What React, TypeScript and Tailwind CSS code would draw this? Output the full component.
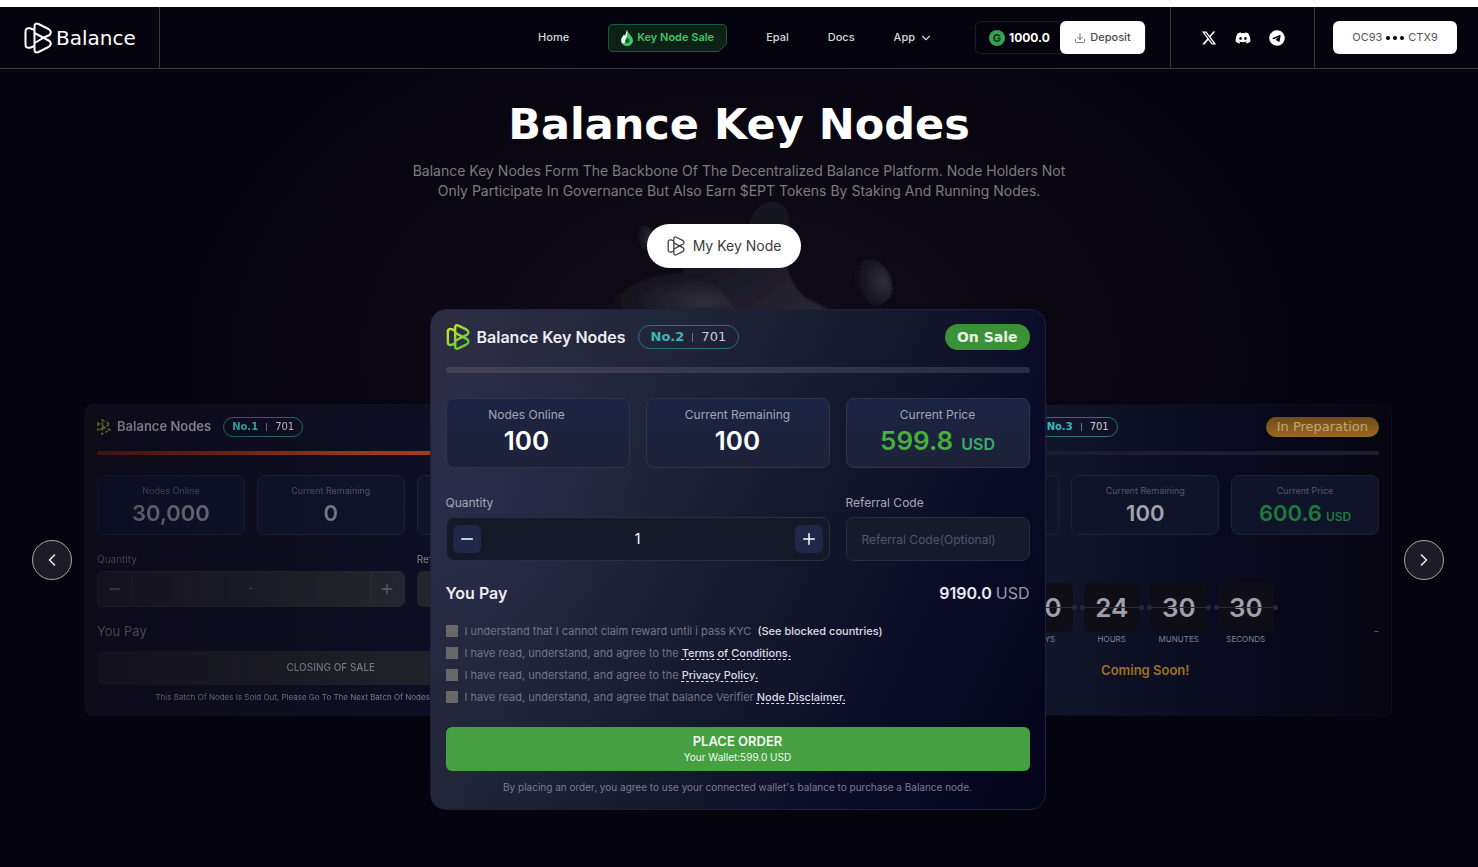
import React, { useId, useState } from "react";
import { ChevronDown, ChevronLeft, ChevronRight, Download, Minus, Plus } from "lucide-react";
import { FaDiscord, FaTelegram, FaXTwitter } from "react-icons/fa6";
import clsx from "clsx";

const wide = "font-['DejaVu_Sans',sans-serif]";

const agreements = [
  {
    id: "kyc",
    text: "I understand that I cannot claim reward until i pass KYC",
    link: "(See blocked countries)",
    dashed: false,
  },
  {
    id: "terms",
    text: "I have read, understand, and agree to the",
    link: "Terms of Conditions.",
    dashed: true,
  },
  {
    id: "privacy",
    text: "I have read, understand, and agree to the",
    link: "Privacy Policy.",
    dashed: true,
  },
  {
    id: "disclaimer",
    text: "I have read, understand, and agree that balance Verifier",
    link: "Node Disclaimer.",
    dashed: true,
  },
];

const countdown = [
  { value: "30", label: "DAYS" },
  { value: "24", label: "HOURS" },
  { value: "30", label: "MUNUTES" },
  { value: "30", label: "SECONDS" },
];

const Logo: React.FC<{ className?: string; lime?: boolean; strokeWidth?: number }> = ({
  className,
  lime,
  strokeWidth = 2,
}) => {
  const id = useId();

  return (
    <svg
      viewBox="0 0 28 32"
      className={className}
      fill="none"
      stroke={lime ? `url(#${id})` : "currentColor"}
      strokeWidth={strokeWidth}
      strokeLinejoin="round"
      aria-hidden="true"
    >
      <linearGradient id={id} x1="0" y1="0" x2="28" y2="32" gradientUnits="userSpaceOnUse">
        <stop stopColor="#e2e62e" />
        <stop offset="1" stopColor="#3fc43a" />
      </linearGradient>
      <path d="M10.500 8 6 6.300Q1.500 5.500 1.500 9.500V22.500Q1.500 26.500 6 25.700L10.500 24" />
      <path d="M20 15.500 10.500 21V27.500Q10.500 31.500 14.500 30L24.500 25Q28.500 22.500 25.500 19L10.500 11V4.500Q10.500 .5 14.500 2L24.500 7Q28.500 9.500 25.500 13Z" />
      <path d="M10.500 11V21" />
    </svg>
  );
};

const NodeBadge: React.FC<{ no: string; small?: boolean }> = ({ no, small }) => (
  <span
    className={clsx(
      "flex items-center gap-2 rounded-full border border-[#28707d]",
      small ? "h-5 px-2 text-[10px]" : "h-6 px-3 text-[13px]",
      wide
    )}
  >
    <span className="font-bold text-[#3fb5bd]">{no}</span>
    <span className={clsx("w-px bg-[#6d7183]", small ? "h-2" : "h-[9px]")} />
    <span className="text-[#c9cbd6]">701</span>
  </span>
);

const Stat: React.FC<{
  label: string;
  value: string;
  unit?: string;
  small?: boolean;
  muted?: boolean;
  className?: string;
}> = ({ label, value, unit, small, muted, className }) => (
  <div
    className={clsx(
      "flex min-w-0 flex-col items-center justify-center rounded-lg border",
      small
        ? "h-[60px] border-[#1d2238] bg-[#10142b]"
        : "h-[70px] border-[#2c3550] bg-linear-to-b from-[#1b2444] to-[#1d2238]",
      className
    )}
  >
    <span
      className={clsx(
        "whitespace-nowrap leading-4",
        small ? "text-[9px] text-[#55576a]" : "text-xs text-[#a3a5b3]"
      )}
    >
      {label}
    </span>
    <span
      className={clsx(
        "flex items-baseline whitespace-nowrap font-semibold",
        small ? "gap-1 text-[22px] leading-7" : "gap-2 text-[26px] leading-9",
        unit && (small ? "text-[#1f7a3c]" : "text-[#47ae40]"),
        !unit && (muted ? "text-[#7c7c88]" : small ? "text-[#a2a2ae]" : "text-white")
      )}
    >
      {value}
      {unit && <span className={small ? "text-xs" : "text-base text-[#3cae68]"}>{unit}</span>}
    </span>
  </div>
);

const Header: React.FC = () => (
  <header className="relative flex h-[62px] border-b border-[#3a3842] text-[11px] font-medium text-[#d6d6da]">
    <a
      href="#"
      className={clsx(
        "flex w-[160px] shrink-0 items-center gap-1 border-r border-[#3a3842] pl-6 text-[20px] text-white",
        wide
      )}
    >
      <Logo className="h-8 w-7" />
      Balance
    </a>

    <nav className="flex flex-1 items-center justify-end gap-[39px] pr-[42px]">
      <a href="#">Home</a>
      <a
        href="#"
        className="relative flex h-[28px] w-[119px] items-center justify-center gap-1 font-semibold text-[#41c463]"
      >
        <svg className="absolute inset-0 h-full w-full" viewBox="0 0 119 28" fill="none" aria-hidden="true">
          <path
            d="M5 .5H114Q118.500 .5 118.500 5V20L110.500 27.500H5Q.5 27.500 .5 23V5Q.5 .5 5 .5Z"
            fill="#0c2217"
            stroke="#1b5a36"
          />
        </svg>
        <svg className="relative h-4 w-3" viewBox="0 0 12 16" aria-hidden="true">
          <path d="M6 0C6.500 3 12 6 12 10.500A6 5.500 0 0 1 0 10.500C0 8 2 6.500 3 4.500L4 6Z" fill="#49c36b" />
          <path d="M6 0C7 5 5 8 3.500 13L1 13C-1 9 2 6.500 3 4.500L4 6Z" fill="#f0fff4" />
          <path d="M6.500 7.500Q9 10 8.500 11.500A2.300 2.300 0 0 1 4 11.500Q4.500 9.500 6.500 7.500Z" fill="#155c33" />
        </svg>
        <span className="relative">Key Node Sale</span>
      </a>
      <a href="#">Epal</a>
      <a href="#">Docs</a>
      <button type="button" className="flex items-center gap-1">
        App
        <ChevronDown className="size-[14px]" />
      </button>
    </nav>

    <div className="flex items-center border-r border-[#3a3842] pr-6">
      <div className="flex h-[33px] items-center rounded-md border border-[#1c1a26] pl-[13px]">
        <span className="grid size-4 place-items-center rounded-full bg-[#37a052] text-[11px] font-bold text-[#0a3518]">
          G
        </span>
        <span className="w-[55px] pl-1 text-xs font-bold text-white">1000.0</span>
        <button
          type="button"
          className="flex h-[33px] w-[85px] items-center justify-center gap-1 rounded-md bg-white text-[#4a4a50]"
        >
          <Download className="size-3" strokeWidth={1.5} />
          Deposit
        </button>
      </div>
    </div>

    <div className="flex w-[144px] items-center justify-center gap-[18px] border-r border-[#3a3842] text-base text-white">
      <a href="#" aria-label="X">
        <FaXTwitter />
      </a>
      <a href="#" aria-label="Discord">
        <FaDiscord />
      </a>
      <a href="#" aria-label="Telegram">
        <FaTelegram />
      </a>
    </div>

    <div className="flex w-[163px] shrink-0 items-center pl-[18px]">
      <button
        type="button"
        className="flex h-[33px] w-[124px] items-center justify-center gap-1 rounded-md bg-white font-normal text-[#55555b]"
      >
        OC93
        <span className="flex gap-[3px]">
          <i className="size-1 rounded-full bg-black" />
          <i className="size-1 rounded-full bg-black" />
          <i className="size-1 rounded-full bg-black" />
        </span>
        CTX9
      </button>
    </div>
  </header>
);

// Smoke shapes floating behind the title
const Blobs: React.FC = () => (
  <svg
    className="pointer-events-none absolute left-1/2 top-[121px] -translate-x-1/2"
    width="400"
    height="130"
    viewBox="0 0 400 130"
    aria-hidden="true"
  >
    <defs>
      <linearGradient id="body" x1="0" y1="0" x2="1" y2="1">
        <stop offset="0.1" stopColor="#0f0d18" />
        <stop offset="1" stopColor="#2c2a37" />
      </linearGradient>
      <radialGradient id="ball" cx="0.75" cy="0.6" r="0.75">
        <stop stopColor="#302e3b" />
        <stop offset="1" stopColor="#0d0b15" />
      </radialGradient>
      <filter id="soft">
        <feGaussianBlur stdDeviation="1" />
      </filter>
    </defs>
    <g filter="url(#soft)">
      <path
        d="M150 60Q175 45 208 46C210 20 225 8 238 12C256 18 250 45 246 65C250 90 258 105 275 112Q292 120 304 130H130Z"
        fill="url(#body)"
      />
      <path d="M62 130C82 76 175 60 200 130Z" fill="url(#ball)" />
      <ellipse cx="107" cy="48" rx="9" ry="13" fill="url(#ball)" transform="rotate(-15 107 48)" />
      <ellipse cx="334" cy="92" rx="18" ry="24" fill="url(#ball)" transform="rotate(-25 334 92)" />
    </g>
  </svg>
);

const SoldOutCard: React.FC = () => (
  <article className="-mr-[148px] min-w-0 flex-1 rounded-lg border border-[#12101d] bg-linear-to-r from-[#12101f] to-[#0a0d24] px-3 pb-[10px] pt-3 mask-[linear-gradient(to_right,rgba(0,0,0,0.65),black_60%)]">
    <div className="flex h-5 items-center">
      <svg className="h-4 w-[14px]" viewBox="0 0 14 16" fill="none" stroke="#8c9430" strokeDasharray="3 2" aria-hidden="true">
        <path d="M5 1 13 5 6 9ZM1 4V12L7 8ZM6 8 13 11 5 15Z" strokeWidth="1.500" />
      </svg>
      <h2 className="ml-[6px] mr-3 text-[13px] font-semibold text-[#a2a2ad]">Balance Nodes</h2>
      <NodeBadge no="No.1" small />
    </div>
    <div className="mt-[14px] h-1 rounded-full bg-linear-to-r from-[#5c1d16] via-[#9b3519] to-[#b5431d]" />
    <div className="mt-5 grid grid-cols-3 gap-3">
      <Stat label="Nodes Online" value="30,000" small muted />
      <Stat label="Current Remaining" value="0" small muted />
      <Stat label="Current Price" value="599.0" unit="USD" small />
    </div>
    <div className="mt-4 grid grid-cols-3 gap-x-3 text-[10px] text-[#5e5e6a]">
      <div className="col-span-2">
        <label htmlFor="sold-quantity" className="block h-5 leading-4">
          Quantity
        </label>
        <div className="flex h-9 rounded-md border border-[#24252f] bg-linear-to-r from-[#1a1a25] to-[#25252d]">
          <button type="button" disabled aria-label="Decrease" className="grid w-[34px] place-items-center rounded-md border-r border-[#262731]">
            <Minus className="size-4" />
          </button>
          <input id="sold-quantity" defaultValue="-" disabled className="min-w-0 flex-1 bg-transparent text-center" />
          <button type="button" disabled aria-label="Increase" className="grid w-[34px] place-items-center rounded-md border-l border-[#2c2d36]">
            <Plus className="size-4" />
          </button>
        </div>
      </div>
      <div>
        <label htmlFor="sold-referral" className="block h-5 leading-4 text-[#85858f]">
          Referral Code
        </label>
        <input id="sold-referral" disabled className="h-9 w-full rounded-md bg-[#24242c]" />
      </div>
    </div>
    <p className="mt-[14px] text-[13px] leading-5 text-[#62626d]">You Pay</p>
    <button
      type="button"
      disabled
      className="mt-[10px] h-[34px] w-full rounded-md bg-linear-to-r from-[#1a1922] to-[#24242b] text-[10px] font-medium text-[#7a7a83]"
    >
      CLOSING OF SALE
    </button>
    <p className="mt-1 truncate text-center text-[8px] leading-4 text-[#7c7c86]">
      This Batch Of Nodes Is Sold Out, Please Go To The Next Batch Of Nodes To Continue Buying
    </p>
  </article>
);

const PreparationCard: React.FC = () => (
  <article className="relative -ml-[147px] min-w-0 flex-1 rounded-lg border border-[#0d0b18] bg-linear-to-r from-[#12162a] from-30% via-[#0a0c22] via-60% to-[#070511] px-3 pt-3">
    <div className="flex h-5 items-center">
      <Logo className="h-4 w-[14px]" lime />
      <h2 className="ml-[6px] mr-3 text-[13px] font-semibold text-[#a2a2ad]">Balance Nodes</h2>
      <NodeBadge no="No.3" small />
      <span
        className={clsx(
          "ml-auto rounded-full bg-linear-to-b from-[#6f4b1b] to-[#98691f] px-[11px] text-[13px] leading-5 text-[#c3a679]",
          wide
        )}
      >
        In Preparation
      </span>
    </div>
    <div className="mt-[14px] h-1 rounded-full bg-[#1c1d30]" />
    <div className="mt-5 grid grid-cols-3 gap-3">
      <Stat label="Nodes Online" value="100" small />
      <Stat label="Current Remaining" value="100" small />
      <Stat label="Current Price" value="600.6" unit="USD" small />
    </div>
    <div className="mt-12 flex justify-center gap-[11px]">
      {countdown.map((item) => (
        <div key={item.label} className="w-14 text-center">
          <div className="relative grid h-[49px] place-items-center rounded-md bg-[#0f0d16]">
            <span className="text-[26px] font-semibold text-[#a09fab]">{item.value}</span>
            <span className="absolute inset-x-0 top-6 h-px bg-[#2b2a36]" />
            <span className="absolute -left-1 top-[22px] size-[5px] rounded-full bg-[#24283a]" />
            <span className="absolute -right-1 top-[22px] size-[5px] rounded-full bg-[#24283a]" />
          </div>
          <p className="text-[8px] leading-[14px] text-[#7d8498]">{item.label}</p>
        </div>
      ))}
    </div>
    <p className="mt-[14px] pb-[35px] text-center text-[13px] font-semibold leading-5 text-[#a0701f]">
      Coming Soon!
    </p>
    <span className="absolute bottom-[74px] right-3 text-xs leading-5 text-[#55566a]">-</span>
  </article>
);

const SaleCard: React.FC = () => {
  const [quantity, setQuantity] = useState(1);

  return (
    <article className="relative z-10 w-[616px] rounded-2xl border border-[#20203a] bg-[radial-gradient(circle_at_8%_38%,rgba(44,48,96,0.35),transparent_30%),linear-gradient(115deg,#2e2d43_0%,#22263b_28%,#161a2d_52%,#0a0c28_76%,#03031a_100%)] px-[15px] pb-[14px] pt-[14px]">
      <div className="flex h-[26px] items-center">
        <Logo className="h-[26px] w-6" lime strokeWidth={3} />
        <h2 className="ml-[7px] mr-3 text-base font-semibold text-[#ececf2]">Balance Key Nodes</h2>
        <NodeBadge no="No.2" />
        <span className={clsx("ml-auto rounded-full bg-[#3c9137] px-3 text-sm font-bold leading-[26px] text-[#e8f5e7]", wide)}>
          On Sale
        </span>
      </div>
      <div className="mt-[17px] h-[6px] rounded-full bg-linear-to-r from-[#434257] to-[#2a2b45]" />
      <div className="mt-[25px] grid grid-cols-3 gap-4">
        <Stat label="Nodes Online" value="100" className="pr-[22px]" />
        <Stat label="Current Remaining" value="100" />
        <Stat label="Current Price" value="599.8" unit="USD" />
      </div>

      <form onSubmit={(e) => e.preventDefault()}>
        <div className="mt-[25px] grid grid-cols-3 gap-4 text-xs text-[#a7a8b5]">
          <div className="col-span-2">
            <label htmlFor="quantity" className="block h-6 leading-5">
              Quantity
            </label>
            <div className="flex h-11 items-center rounded-lg border border-[#2a2e40] bg-[#151a29] px-[6px] text-white">
              <button
                type="button"
                aria-label="Decrease"
                onClick={() => setQuantity(Math.max(1, quantity - 1))}
                className="grid size-7 place-items-center rounded-md bg-[#202849]"
              >
                <Minus className="size-[18px]" />
              </button>
              <input
                id="quantity"
                value={quantity}
                onChange={(e) => setQuantity(Number(e.target.value) || 1)}
                className="min-w-0 flex-1 bg-transparent text-center text-sm outline-none"
              />
              <button
                type="button"
                aria-label="Increase"
                onClick={() => setQuantity(quantity + 1)}
                className="grid size-7 place-items-center rounded-md bg-[#202849]"
              >
                <Plus className="size-[18px]" />
              </button>
            </div>
          </div>
          <div>
            <label htmlFor="referral" className="block h-6 leading-5">
              Referral Code
            </label>
            <input
              id="referral"
              placeholder="Referral Code(Optional)"
              className="h-11 w-full rounded-lg border border-[#292c3e] bg-[#161a2a] px-[15px] text-xs outline-none placeholder:text-[#53566a]"
            />
          </div>
        </div>

        <div className="mt-5 flex h-6 items-center justify-between text-base font-semibold text-[#ececf2]">
          <span>You Pay</span>
          <span>
            9190.0 <span className="font-normal text-[#9a9ba8]">USD</span>
          </span>
        </div>

        <div className="mt-4 flex flex-col gap-[2px] text-[11px] leading-5 text-[#737586]">
          {agreements.map((item) => (
            <div key={item.id} className="flex items-center">
              <input
                id={item.id}
                type="checkbox"
                className="mr-[7px] size-3 appearance-none bg-[#686868] checked:bg-[#46a041]"
              />
              <label htmlFor={item.id}>{item.text}</label>
              <a
                href="#"
                className={clsx(
                  "font-medium text-[#dcdce4]",
                  item.dashed
                    ? "ml-[3px] underline decoration-dashed underline-offset-2"
                    : "ml-[6px]"
                )}
              >
                {item.link}
              </a>
            </div>
          ))}
        </div>

        <button
          type="submit"
          className="mt-5 flex h-11 w-full flex-col items-center justify-center rounded-md bg-[#46a041] text-[#effaee]"
        >
          <span className="text-[13px] font-semibold leading-4">PLACE ORDER</span>
          <span className="text-[10px] leading-4">Your Wallet:599.0 USD</span>
        </button>
      </form>
      <p className="mt-2 text-center text-[10px] leading-4 text-[#7b7d8f]">
        By placing an order, you agree to use your connected wallet's balance to purchase a Balance node.
      </p>
    </article>
  );
};

const arrow =
  "grid size-10 shrink-0 place-items-center rounded-full border border-[#a6a5ad] bg-[#1d1b28] text-[#e4e4ea]";

const App: React.FC = () => {
  return (
    <div className="min-h-screen bg-[#05030e] font-['Inter',sans-serif]">
      <div className="h-[7px] bg-white" />
      <Header />

      <main className="relative bg-[radial-gradient(ellipse_at_50%_36%,#110d18_0%,#05030e_55%)] pb-[56px] pt-8">
        <Blobs />
        <section className="relative flex flex-col items-center px-4 text-center">
          <h1 className={clsx("text-[43px] font-bold leading-[46px] text-white", wide)}>
            Balance Key Nodes
          </h1>
          <p className="mt-[14px] max-w-[680px] text-sm leading-5 text-[#7d7b84]">
            Balance Key Nodes Form The Backbone Of The Decentralized Balance Platform. Node Holders Not
            Only Participate In Governance But Also Earn $EPT Tokens By Staking And Running Nodes.
          </p>
          <button
            type="button"
            className="mr-[30px] mt-[23px] flex h-11 items-center gap-2 rounded-full bg-white px-5 text-sm text-[#3b3b41]"
          >
            <Logo className="h-5 w-[18px]" />
            My Key Node
          </button>
        </section>

        <section className="relative mt-[41px] flex items-center justify-center gap-3 pl-8 pr-[34px]">
          <button type="button" aria-label="Previous" className={arrow}>
            <ChevronLeft className="size-5" />
          </button>
          <div className="flex min-w-0 flex-1 items-center">
            <SoldOutCard />
            <SaleCard />
            <PreparationCard />
          </div>
          <button type="button" aria-label="Next" className={arrow}>
            <ChevronRight className="size-5" />
          </button>
        </section>
      </main>
    </div>
  );
};

export default App;
